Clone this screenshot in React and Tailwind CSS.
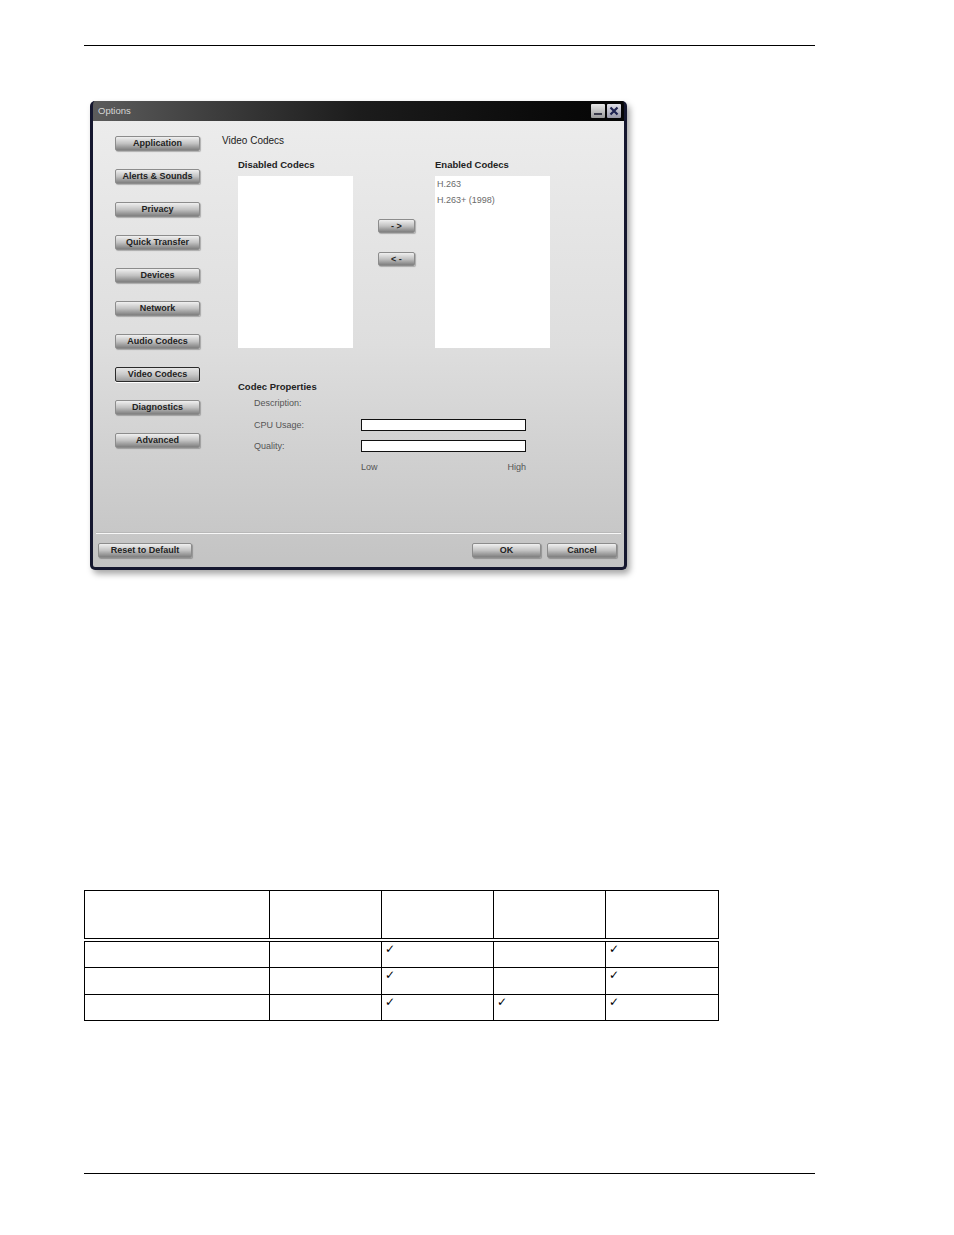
import React from "react";

const font = { fontFamily: '"Liberation Sans", Arial, sans-serif' };

function GlossButton({ children, selected = false, className = "" }) {
  return (
    <div
      className={
        "flex items-center justify-center rounded-[2px] text-[9px] font-bold leading-none text-[#222] " +
        (selected
          ? "border border-[#2a2a2a] bg-gradient-to-b from-[#e6e6e6] via-[#c9c9c9] to-[#9d9d9d] shadow-[0_1px_0_#fff] "
          : "border border-[#8c8c8c] bg-gradient-to-b from-[#f0f0f0] via-[#c2c2c2] to-[#7f7f7f] shadow-[1px_1px_1px_rgba(0,0,0,0.25)] ") +
        className
      }
    >
      {children}
    </div>
  );
}

const navItems = [
  "Application",
  "Alerts & Sounds",
  "Privacy",
  "Quick Transfer",
  "Devices",
  "Network",
  "Audio Codecs",
  "Video Codecs",
  "Diagnostics",
  "Advanced",
];

function OptionsDialog() {
  return (
    <div
      className="ml-[90px] mt-[55px] flex h-[469px] w-[537px] flex-col overflow-hidden rounded-[5px] border-[3px] border-t-0 border-[#15172f] bg-[#15172f] shadow-[3px_4px_6px_rgba(0,0,0,0.35)]"
      style={font}
    >
      {/* Title bar */}
      <div className="flex h-[20px] items-center justify-between bg-gradient-to-r from-[#5c5c5c] via-[#1c1c1c] to-[#050505] pl-[5px] pr-[3px]">
        <span className="text-[9.5px] text-[#d6d6d6]">Options</span>
        <div className="flex gap-[2px]">
          <div className="flex h-[14px] w-[14px] items-end justify-center rounded-[1px] bg-gradient-to-b from-[#e8e8e8] to-[#9a9a9a] pb-[3px]">
            <div className="h-[2px] w-[8px] bg-[#3a3a4a]" />
          </div>
          <div className="flex h-[14px] w-[14px] items-center justify-center rounded-[1px] bg-gradient-to-b from-[#e0e0e8] to-[#9898a8]">
            <svg width="10" height="10" viewBox="0 0 10 10">
              <path d="M1.5 1.5 L8.5 8.5 M8.5 1.5 L1.5 8.5" stroke="#1d2250" strokeWidth="2.2" />
            </svg>
          </div>
        </div>
      </div>

      {/* Body */}
      <div className="flex flex-1 flex-col bg-gradient-to-b from-[#ececec] via-[#dedede] to-[#c3c3c3]">
        <div className="flex">
          {/* Left nav */}
          <div className="ml-[22px] mt-[15px] flex w-[85px] flex-col gap-[18px]">
            {navItems.map((n) => (
              <GlossButton key={n} selected={n === "Video Codecs"} className="h-[15px] w-[85px]">
                {n}
              </GlossButton>
            ))}
          </div>

          {/* Content */}
          <div className="ml-[22px] mt-[14px] flex flex-col">
            <div className="text-[10px] leading-[12px] text-[#222]">Video Codecs</div>

            <div className="ml-[16px] mt-[12px] flex">
              <div className="flex flex-col">
                <div className="text-[9.5px] font-bold leading-[12px] text-[#222]">Disabled Codecs</div>
                <div className="mt-[5px] h-[172px] w-[115px] bg-white" />
              </div>
              <div className="ml-[25px] mt-[60px] flex flex-col gap-[19px]">
                <GlossButton className="h-[14px] w-[37px]">- &gt;</GlossButton>
                <GlossButton className="h-[14px] w-[37px]">&lt; -</GlossButton>
              </div>
              <div className="ml-[20px] flex flex-col">
                <div className="text-[9.5px] font-bold leading-[12px] text-[#222]">Enabled Codecs</div>
                <div className="mt-[5px] flex h-[172px] w-[115px] flex-col gap-[5px] bg-white px-[2px] pt-[3px] text-[9px] leading-[11px] text-[#6a6a6a]">
                  <span>H.263</span>
                  <span>H.263+ (1998)</span>
                </div>
              </div>
            </div>

            <div className="ml-[16px] mt-[33px] text-[9.5px] font-bold leading-[12px] text-[#222]">Codec Properties</div>
            <div className="ml-[32px] mt-[5px] flex flex-col text-[9px] leading-[11px] text-[#555]">
              <span>Description:</span>
              <div className="mt-[10px] flex items-center">
                <span className="w-[107px]">CPU Usage:</span>
                <div className="h-[12px] w-[165px] border border-[#111] bg-white" />
              </div>
              <div className="mt-[9px] flex items-center">
                <span className="w-[107px]">Quality:</span>
                <div className="h-[12px] w-[165px] border border-[#111] bg-white" />
              </div>
              <div className="ml-[107px] mt-[10px] flex w-[165px] justify-between">
                <span>Low</span>
                <span>High</span>
              </div>
            </div>
          </div>
        </div>

        {/* Footer */}
        <div className="mt-auto">
          <div className="mx-[3px] h-px bg-[#f7f7f7] shadow-[0_-1px_0_#b8b8b8]" />
          <div className="flex items-center justify-between pb-[9px] pl-[5px] pr-[7px] pt-[9px]">
            <GlossButton className="h-[15px] w-[94px]">Reset to Default</GlossButton>
            <div className="flex gap-[6px]">
              <GlossButton className="h-[15px] w-[69px]">OK</GlossButton>
              <GlossButton className="h-[15px] w-[70px]">Cancel</GlossButton>
            </div>
          </div>
        </div>
      </div>
    </div>
  );
}

const rows = [
  [false, true, false, true],
  [false, true, false, true],
  [false, true, true, true],
];

function Check() {
  return (
    <span className="text-[12px] leading-[13px] text-black" style={{ fontFamily: '"DejaVu Sans", sans-serif' }}>
      ✓
    </span>
  );
}

function FeatureTable() {
  const widths = ["w-[185px]", "w-[112px]", "w-[112px]", "w-[112px]", "w-[113px]"];
  const rowHeights = ["h-[28px]", "h-[27px]", "h-[26px]"];
  return (
    <table className="ml-[84px] mt-[320px] w-[634px] table-fixed border-collapse border border-black" style={font}>
      <thead>
        <tr className="h-[49px] border-b-4 border-double border-black">
          {widths.map((w, i) => (
            <th key={i} className={w + " border border-black"} />
          ))}
        </tr>
      </thead>
      <tbody>
        {rows.map((r, ri) => (
          <tr key={ri} className={rowHeights[ri]}>
            <td className="border border-black" />
            {r.map((c, ci) => (
              <td key={ci} className="border border-black pl-[3px] pt-0 align-top text-[13px] leading-[13px]">
                {c && <Check />}
              </td>
            ))}
          </tr>
        ))}
      </tbody>
    </table>
  );
}

export default function App() {
  return (
    <div className="flex h-[1235px] w-[954px] flex-col bg-white">
      <div className="ml-[84px] mt-[45px] h-px w-[731px] bg-black" />
      <OptionsDialog />
      <FeatureTable />
      <div className="ml-[84px] mt-[152px] h-px w-[731px] bg-black" />
    </div>
  );
}
